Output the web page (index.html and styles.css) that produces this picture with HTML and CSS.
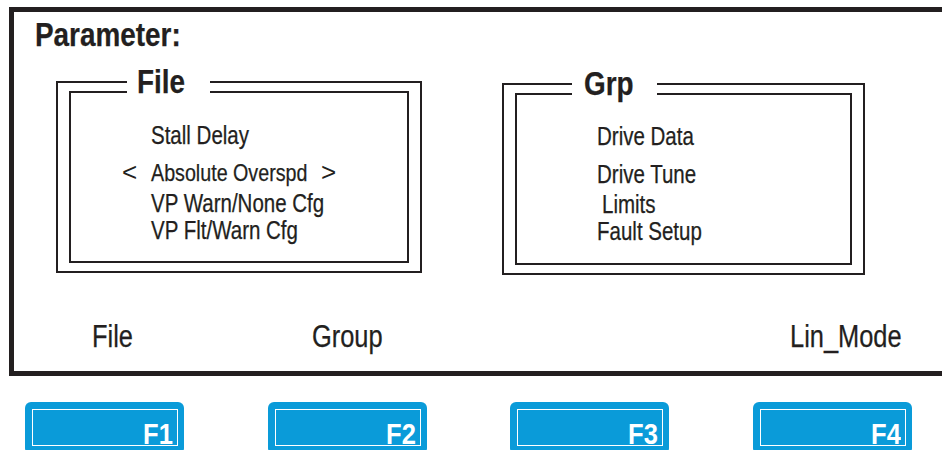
FILE: index.html
```html
<!DOCTYPE html>
<html>
<head>
<meta charset="utf-8">
<link rel="stylesheet" href="styles.css">
</head>
<body>
<div class="frame">
  <div class="heading"><span class="t">Parameter:</span></div>
  <div class="panels">
    <div class="panel panel-file">
      <div class="legend"><span class="t">File</span></div>
      <div class="inner">
        <div class="item i1"><span class="t">Stall Delay</span></div>
        <div class="item i2 selected"><span class="arr">&lt;</span><span class="t sel-text">Absolute Overspd</span><span class="arr">&gt;</span></div>
        <div class="item i3"><span class="t">VP Warn/None Cfg</span></div>
        <div class="item i4"><span class="t">VP Flt/Warn Cfg</span></div>
      </div>
    </div>
    <div class="panel panel-grp">
      <div class="legend"><span class="t">Grp</span></div>
      <div class="inner">
        <div class="item g1"><span class="t">Drive Data</span></div>
        <div class="item g2"><span class="t">Drive Tune</span></div>
        <div class="item g3"><span class="t">Limits</span></div>
        <div class="item g4"><span class="t">Fault Setup</span></div>
      </div>
    </div>
  </div>
  <div class="softkeys">
    <span class="sk t">File</span>
    <span class="sk t">Group</span>
    <span class="sk t">Lin_Mode</span>
  </div>
</div>
<div class="fkeys">
  <div class="fkey"><div class="fkey-in"><span class="fk-label">F1</span></div></div>
  <div class="fkey"><div class="fkey-in"><span class="fk-label">F2</span></div></div>
  <div class="fkey"><div class="fkey-in"><span class="fk-label">F3</span></div></div>
  <div class="fkey"><div class="fkey-in"><span class="fk-label">F4</span></div></div>
</div>
</body>
</html>
```

FILE: styles.css
```css
html, body {
  margin: 0;
  padding: 0;
  overflow: hidden;
  background: #ffffff;
}
body {
  width: 942px;
  height: 450px;
  font-family: "Liberation Sans", Arial, sans-serif;
  color: #231f20;
}
.t {
  display: inline-block;
  white-space: nowrap;
  transform: scaleX(0.82);
  transform-origin: 0 50%;
  -webkit-text-stroke: 0.25px #231f20;
}
.frame {
  box-sizing: border-box;
  margin: 7px 0 0 9px;
  width: 960px;
  height: 369px;
  border: 5px solid #231f20;
}
.heading {
  margin-top: 5px;
  padding-left: 21px;
  font-weight: bold;
  font-size: 34px;
  line-height: 34px;
}
.panels {
  display: flex;
  align-items: flex-start;
  margin-top: 30px;
  padding-left: 42px;
  gap: 80px;
}
.panel {
  position: relative;
  box-sizing: border-box;
  height: 192px;
  border: 2px solid #231f20;
  padding: 8px 11px;
}
.panel-file { width: 366px; }
.panel-grp { width: 363px; margin-top: 2px; }
.inner {
  box-sizing: border-box;
  height: 172px;
  border: 2px solid #231f20;
}
.legend {
  position: absolute;
  top: -19px;
  box-sizing: border-box;
  height: 34px;
  background: #ffffff;
  font-weight: bold;
  font-size: 34px;
  line-height: 34px;
}
.panel-file .legend {
  left: 69px;
  width: 83px;
  padding-left: 10px;
}
.panel-grp .legend {
  left: 68px;
  width: 85px;
  padding-left: 12px;
}
.item {
  font-size: 25px;
  line-height: 25px;
  padding-left: 80px;
}
.i1 { margin-top: 30px; }
.i2 { margin-top: 12px; }
.i3 { margin-top: 6px; }
.i4 { margin-top: 2px; }
.g1 { margin-top: 29px; }
.g2 { margin-top: 13px; }
.g3 { margin-top: 5px; padding-left: 85px; }
.g4 { margin-top: 2px; }
.selected {
  display: flex;
  padding-left: 51px;
}
.sel-text {
  width: 170px;
  font-size: 24px;
}
.arr {
  font-size: 26px;
  width: 29px;
}
.softkeys {
  display: grid;
  grid-template-columns: 220px 478px 1fr;
  padding-left: 78px;
  margin-top: 46px;
  font-size: 31px;
  line-height: 31px;
}
.fkeys {
  display: flex;
  justify-content: space-between;
  padding: 0 30px 0 25px;
  margin-top: 26px;
}
.fkey {
  box-sizing: border-box;
  width: 159px;
  height: 52px;
  background: #0a9bd9;
  border-radius: 6px;
  padding: 7px 6px 0 7px;
}
.fkey-in {
  box-sizing: border-box;
  height: 37px;
  border: 1px solid #ffffff;
  display: flex;
  justify-content: flex-end;
  align-items: flex-end;
  padding-right: 4px;
  color: #ffffff;
  font-weight: bold;
  font-size: 29px;
  line-height: 22px;
}
.fk-label {
  display: inline-block;
  transform: scaleX(0.88);
  transform-origin: 100% 50%;
}
```
